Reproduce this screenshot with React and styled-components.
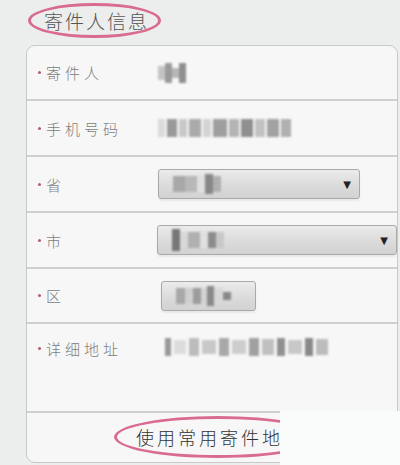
import React from "react";
import styled, { createGlobalStyle } from "styled-components";

const Global = createGlobalStyle`
  html, body { margin: 0; padding: 0; }
  body {
    background: #eceeed;
    font-family: "Noto Sans CJK SC", "Noto Sans", sans-serif;
    width: 400px;
    height: 465px;
    overflow: hidden;
  }
`;

const Page = styled.div`
  position: relative;
  width: 400px;
  height: 465px;
  overflow: hidden;
  padding-left: 26px;
  box-sizing: border-box;
`;

const TitleBar = styled.div`
  height: 45px;
  display: flex;
  align-items: center;
  padding-left: 18px;
  padding-bottom: 4px;
  box-sizing: border-box;
`;

const Circled = styled.span`
  position: relative;
  display: inline-block;
  font-size: ${({ $size }) => $size}px;
  font-weight: 300;
  letter-spacing: ${({ $spacing }) => $spacing}px;
  color: ${({ $color }) => $color};
  line-height: 1;

  &::before {
    content: "";
    position: absolute;
    left: ${({ $padX }) => -$padX}px;
    right: ${({ $padX }) => -$padX + 4}px;
    top: ${({ $padY }) => -$padY}px;
    bottom: ${({ $padY }) => -$padY}px;
    border: 3px solid #da6b90;
    border-radius: 50%;
  }
`;

const Card = styled.div`
  width: 372px;
  height: 418px;
  background: #f7f7f7;
  border: 1px solid #c9c9c9;
  border-radius: 9px;
  display: flex;
  flex-direction: column;
  box-sizing: border-box;
  overflow: hidden;
`;

const Row = styled.div`
  height: ${({ $h }) => $h}px;
  border-bottom: 2px solid #d0d0d0;
  display: flex;
  align-items: ${({ $top }) => ($top ? "flex-start" : "center")};
  padding-top: ${({ $top }) => ($top ? "14px" : "0")};
  box-sizing: border-box;
  flex-shrink: 0;
`;

const Label = styled.div`
  width: 131px;
  padding-left: 11px;
  box-sizing: border-box;
  font-size: 15px;
  font-weight: 300;
  letter-spacing: 4px;
  color: #808080;
  display: flex;
  align-items: center;
  gap: 5px;

  &::before {
    content: "";
    width: 3px;
    height: 3px;
    border-radius: 50%;
    background: #b06070;
  }
`;

const Mosaic = styled.div`
  display: flex;
  align-items: center;
  gap: ${({ $gap }) => $gap ?? 2}px;
  filter: blur(1.3px);
  margin-left: ${({ $ml }) => $ml ?? 0}px;
`;

const Tile = styled.span`
  display: block;
  width: ${({ $w }) => $w}px;
  height: ${({ $h }) => $h}px;
  background: ${({ $c }) => $c};
`;

const Select = styled.div`
  width: ${({ $w }) => $w}px;
  height: 30px;
  margin-left: ${({ $ml }) => $ml ?? 0}px;
  border: 1px solid #a9a9a9;
  border-radius: 3px;
  background: linear-gradient(#ebebeb, #dadada 60%, #d2d2d2);
  box-sizing: border-box;
  display: flex;
  align-items: center;
  justify-content: space-between;
  padding: 0 8px 0 14px;
  box-shadow: 0 2px 2px rgba(0, 0, 0, 0.06);
`;

const Arrow = styled.span`
  font-size: 10px;
  color: #222;
  font-family: "DejaVu Sans", sans-serif;
`;

const Footer = styled.div`
  flex: 1;
  display: flex;
  align-items: center;
  padding-left: 109px;
  padding-bottom: 2px;
`;

const WhiteOverlay = styled.div`
  position: absolute;
  left: 280px;
  top: 411px;
  width: 120px;
  height: 54px;
  background: #fafbfb;
`;

const Tiles = ({ items, gap, ml }) => (
  <Mosaic $gap={gap} $ml={ml}>
    {items.map(([w, h, c], i) => (
      <Tile key={i} $w={w} $h={h} $c={c} />
    ))}
  </Mosaic>
);

export default function App() {
  return (
    <Page>
      <Global />
      <TitleBar>
        <Circled $size={19} $spacing={2} $color="#555" $padX={16} $padY={8}>
          寄件人信息
        </Circled>
      </TitleBar>
      <Card>
        <Row $h={55}>
          <Label>寄件人</Label>
          <Tiles
            items={[
              [7, 14, "#c4c4c4"],
              [7, 20, "#9a9a9a"],
              [7, 10, "#b8b8b8"],
              [7, 20, "#8e8e8e"],
            ]}
            gap={0}
          />
        </Row>
        <Row $h={56}>
          <Label>手机号码</Label>
          <Tiles
            items={[
              [7, 18, "#dadada"],
              [10, 18, "#999"],
              [8, 18, "#c8c8c8"],
              [12, 18, "#aaa"],
              [8, 18, "#d4d4d4"],
              [14, 18, "#9e9e9e"],
              [10, 18, "#b4b4b4"],
              [12, 18, "#8f8f8f"],
              [10, 18, "#c2c2c2"],
              [12, 18, "#a2a2a2"],
              [10, 18, "#b0b0b0"],
            ]}
            gap={2}
          />
        </Row>
        <Row $h={56}>
          <Label>省</Label>
          <Select $w={202}>
            <Tiles
              items={[
                [12, 16, "#a8a8a8"],
                [12, 16, "#b8b8b8"],
                [8, 16, "#e0e0e0"],
                [8, 20, "#888"],
                [8, 16, "#b0b0b0"],
              ]}
              gap={0}
            />
            <Arrow>▼</Arrow>
          </Select>
        </Row>
        <Row $h={56}>
          <Label>市</Label>
          <Select $w={242}>
            <Tiles
              items={[
                [8, 22, "#777"],
                [8, 16, "#d8d8d8"],
                [12, 16, "#b0b0b0"],
                [8, 16, "#e0e0e0"],
                [8, 16, "#8c8c8c"],
                [8, 16, "#c8c8c8"],
              ]}
              gap={0}
            />
            <Arrow>▼</Arrow>
          </Select>
        </Row>
        <Row $h={55}>
          <Label>区</Label>
          <Select $w={95} $ml={3}>
            <Tiles
              items={[
                [9, 16, "#a8a8a8"],
                [8, 16, "#cfcfcf"],
                [8, 16, "#9c9c9c"],
                [6, 16, "#d4d4d4"],
                [7, 20, "#8a8a8a"],
                [9, 16, "#d8d8d8"],
                [8, 8, "#888"],
              ]}
              gap={0}
            />
          </Select>
        </Row>
        <Row $h={89} $top>
          <Label>详细地址</Label>
          <Tiles
            ml={7}
            items={[
              [6, 18, "#999"],
              [12, 14, "#dcdcdc"],
              [10, 18, "#bcbcbc"],
              [14, 14, "#c8c8c8"],
              [10, 18, "#a8a8a8"],
              [14, 14, "#cdcdcd"],
              [10, 18, "#a0a0a0"],
              [12, 16, "#c0c0c0"],
              [8, 18, "#909090"],
              [14, 14, "#c8c8c8"],
              [8, 18, "#888"],
              [12, 16, "#bcbcbc"],
            ]}
            gap={3}
          />
        </Row>
        <Footer>
          <Circled $size={18} $spacing={3} $color="#333" $padX={22} $padY={12}>
            使用常用寄件地址
          </Circled>
        </Footer>
      </Card>
      <WhiteOverlay />
    </Page>
  );
}
